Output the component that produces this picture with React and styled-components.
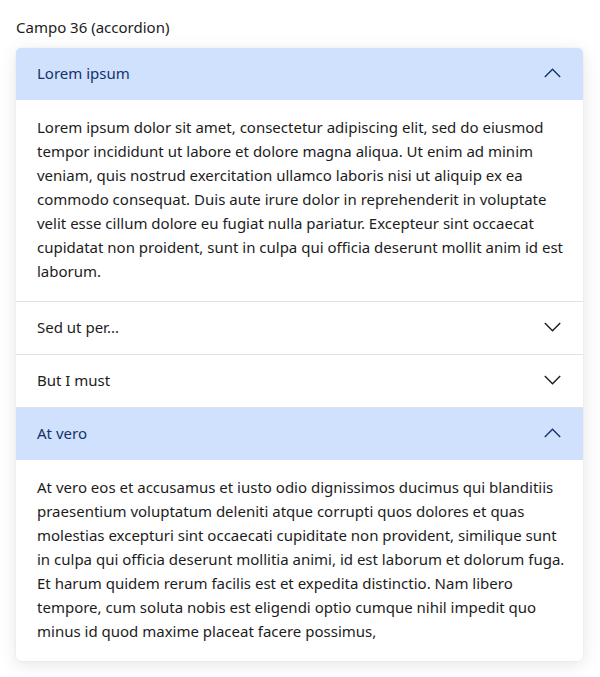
import React, { useState } from "react";
import styled, { createGlobalStyle } from "styled-components";

const GlobalStyle = createGlobalStyle`
  * { box-sizing: border-box; }
  body {
    margin: 0;
    background: #ffffff;
    font-family: "Noto Sans", "Open Sans", sans-serif;
    color: #1c1c1c;
  }
`;

const Page = styled.div`
  padding: 17px 17px 17px 16px;
`;

const Label = styled.div`
  font-size: 15px;
  line-height: 20px;
  color: #1c1c1c;
  margin-bottom: 11px;
`;

const Card = styled.div`
  border-radius: 5px;
  background: #fff;
  box-shadow: 0 4px 18px rgba(0, 0, 0, 0.1), 0 0 2px rgba(0, 0, 0, 0.08);
  overflow: hidden;
`;

const Item = styled.div`
  & + & {
    border-top: 1px solid #dfe3e8;
  }
`;

const Header = styled.button`
  display: flex;
  align-items: center;
  justify-content: space-between;
  width: 100%;
  height: 52px;
  padding: 0 22px 2px 21px;
  border: none;
  background: ${(p) => (p.$open ? "#cfe1fc" : "#ffffff")};
  color: ${(p) => (p.$open ? "#15326b" : "#1c1c1c")};
  font-family: inherit;
  font-size: 15px;
  text-align: left;
  cursor: pointer;
`;

const Body = styled.div`
  padding: 15px 12px 18px 21px;
  font-size: 15px;
  line-height: 24px;
  color: #1c1c1c;
`;

const Chevron = ({ up, color }) => (
  <svg width="17" height="10" viewBox="0 0 17 10" fill="none">
    <path
      d={up ? "M0.8 9 L8.5 1.3 L16.2 9" : "M0.8 1 L8.5 8.7 L16.2 1"}
      stroke={color}
      strokeWidth="1.4"
    />
  </svg>
);

const items = [
  {
    title: "Lorem ipsum",
    text:
      "Lorem ipsum dolor sit amet, consectetur adipiscing elit, sed do eiusmod tempor incididunt ut labore et dolore magna aliqua. Ut enim ad minim veniam, quis nostrud exercitation ullamco laboris nisi ut aliquip ex ea commodo consequat. Duis aute irure dolor in reprehenderit in voluptate velit esse cillum dolore eu fugiat nulla pariatur. Excepteur sint occaecat cupidatat non proident, sunt in culpa qui officia deserunt mollit anim id est laborum.",
  },
  { title: "Sed ut per...", text: "Sed ut perspiciatis unde omnis iste natus error sit voluptatem." },
  { title: "But I must", text: "But I must explain to you how all this mistaken idea was born." },
  {
    title: "At vero",
    text:
      "At vero eos et accusamus et iusto odio dignissimos ducimus qui blanditiis praesentium voluptatum deleniti atque corrupti quos dolores et quas molestias excepturi sint occaecati cupiditate non provident, similique sunt in culpa qui officia deserunt mollitia animi, id est laborum et dolorum fuga. Et harum quidem rerum facilis est et expedita distinctio. Nam libero tempore, cum soluta nobis est eligendi optio cumque nihil impedit quo minus id quod maxime placeat facere possimus,",
  },
];

const App = () => {
  const [open, setOpen] = useState([0, 3]);

  const toggle = (i) =>
    setOpen((o) => (o.includes(i) ? o.filter((x) => x !== i) : [...o, i]));

  return (
    <>
      <GlobalStyle />
      <Page>
        <Label>Campo 36 (accordion)</Label>
        <Card>
          {items.map((item, i) => {
            const isOpen = open.includes(i);
            return (
              <Item key={item.title}>
                <Header $open={isOpen} onClick={() => toggle(i)}>
                  {item.title}
                  <Chevron up={isOpen} color={isOpen ? "#15326b" : "#1c1c1c"} />
                </Header>
                {isOpen && <Body>{item.text}</Body>}
              </Item>
            );
          })}
        </Card>
      </Page>
    </>
  );
};

export default App;
